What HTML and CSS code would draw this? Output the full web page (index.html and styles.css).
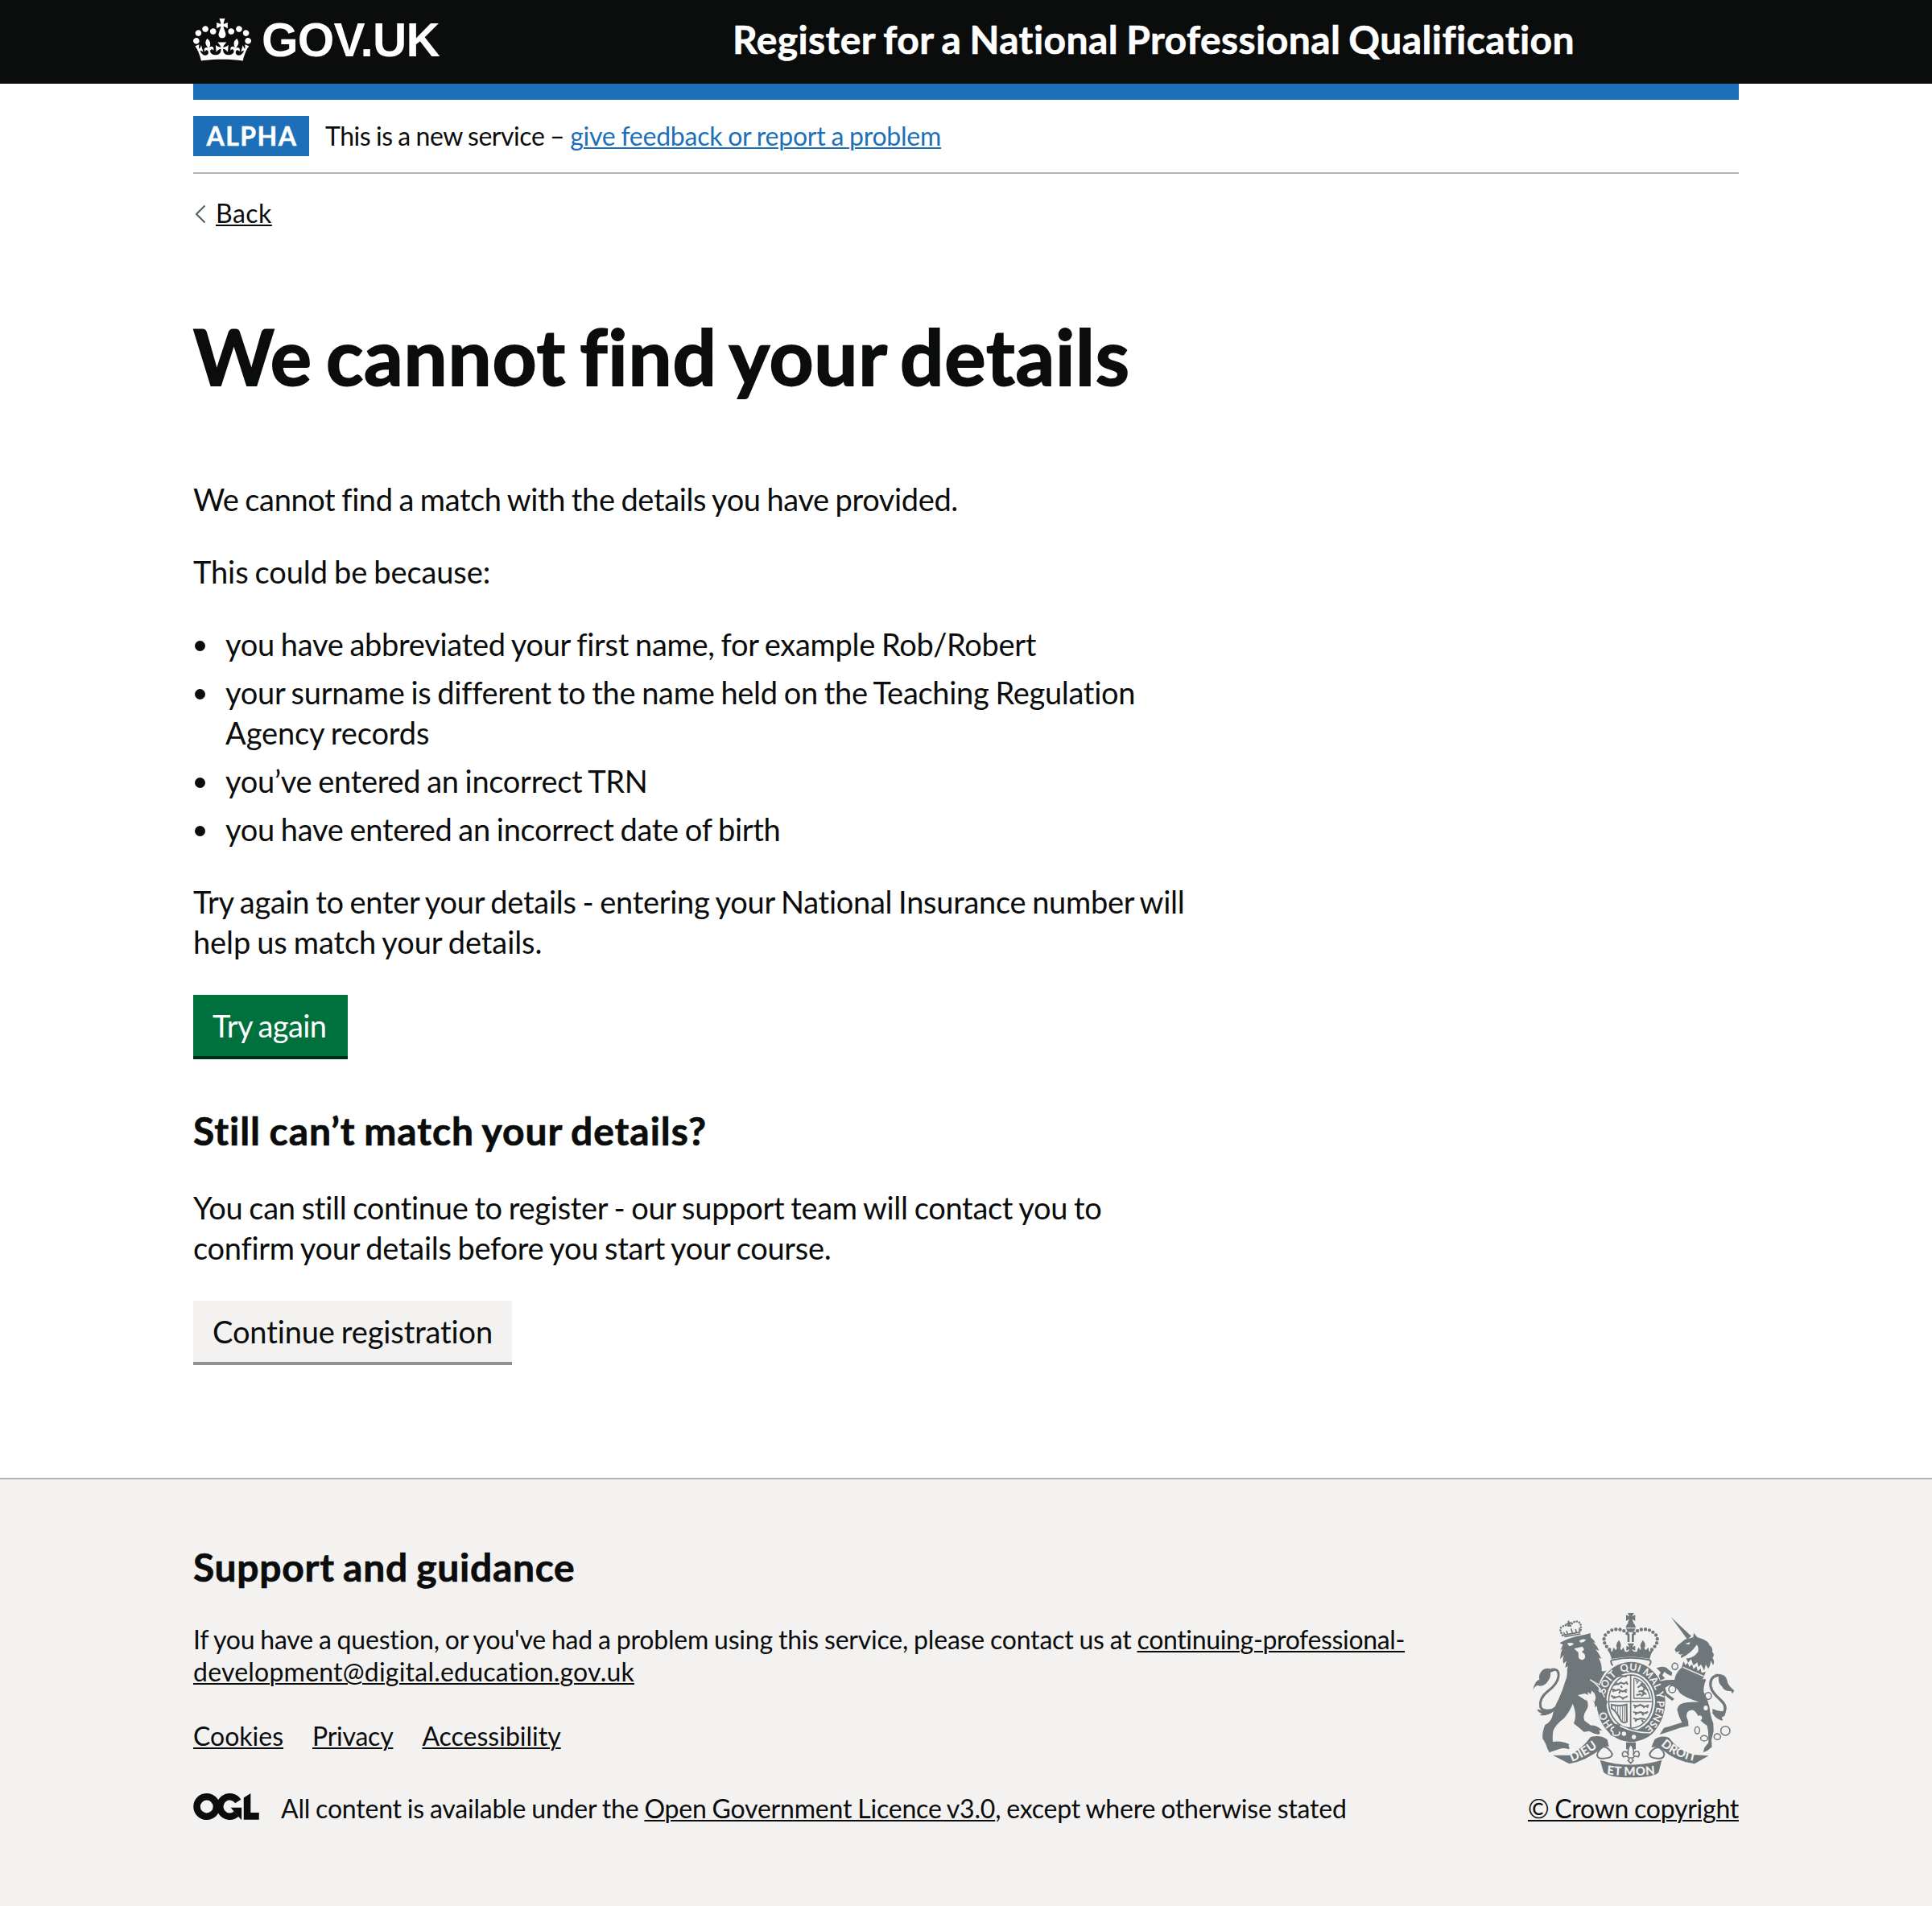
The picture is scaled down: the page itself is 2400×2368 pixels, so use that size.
FILE: index.html
```
<!DOCTYPE html>
<html lang="en">
<head>
<meta charset="utf-8">
<title>We cannot find your details - Register for a National Professional Qualification</title>
<link rel="stylesheet" href="styles.css">
</head>
<body>
<header class="header">
  <div class="container header-inner">
    <a class="logo" href="#">
      <svg class="logo-crown" viewBox="0 0 132 97" aria-hidden="true"><path fill="currentColor" fill-rule="evenodd" d="M25 30.2c3.5 1.5 7.7-.2 9.1-3.7 1.5-3.6-.2-7.8-3.9-9.2-3.6-1.4-7.6.3-9.1 3.9-1.4 3.5.3 7.5 3.9 9zM9 39.5c3.6 1.5 7.8-.2 9.2-3.7 1.5-3.6-.2-7.8-3.9-9.1-3.6-1.5-7.6.2-9.1 3.8-1.4 3.5.3 7.5 3.8 9zM4.4 57.2c3.5 1.5 7.7-.2 9.1-3.8 1.5-3.6-.2-7.7-3.9-9.1-3.5-1.5-7.6.3-9.1 3.8-1.4 3.5.3 7.6 3.9 9.1zm38.3-21.4c3.5 1.5 7.7-.2 9.1-3.8 1.5-3.6-.2-7.7-3.9-9.1-3.6-1.5-7.6.3-9.1 3.8-1.3 3.6.4 7.7 3.9 9.1zm64.4-5.6c-3.6 1.5-7.8-.2-9.1-3.7-1.5-3.6.2-7.8 3.8-9.2 3.6-1.4 7.7.3 9.2 3.9 1.3 3.5-.4 7.5-3.9 9zm15.9 9.3c-3.6 1.5-7.7-.2-9.1-3.7-1.5-3.6.2-7.8 3.7-9.1 3.6-1.5 7.7.2 9.2 3.8 1.5 3.5-.3 7.5-3.8 9zm4.7 17.7c-3.6 1.5-7.8-.2-9.2-3.8-1.5-3.6.2-7.7 3.9-9.1 3.6-1.5 7.7.3 9.2 3.8 1.3 3.5-.4 7.6-3.9 9.1zM89.3 35.8c-3.6 1.5-7.8-.2-9.2-3.8-1.4-3.6.2-7.7 3.9-9.1 3.6-1.5 7.7.3 9.2 3.8 1.4 3.6-.3 7.7-3.9 9.1zM69.7 17.7l8.9 4.7V9.3l-8.9 2.8c-.2-.3-.5-.6-.9-.9L72.4 0H59.6l3.5 11.2c-.3.3-.6.5-.9.9l-8.8-2.8v13.1l8.8-4.7c.3.3.6.7.9.9l-5 15.4v.1c-.2.8-.4 1.6-.4 2.4 0 4.1 3.1 7.5 7 8.1h.2c.3 0 .7.1 1 .1.4 0 .7 0 1-.1h.2c4-.6 7.1-4.1 7.1-8.1 0-.8-.1-1.7-.4-2.4V34l-5.1-15.4c.4-.2.7-.6 1-.9zM66 92.8c16.9 0 32.8 1.1 47.1 3.2 4-16.9 8.9-26.7 14-33.5l-9.6-3.4c1 4.9 1.1 7.2 0 10.2-1.5-1.4-3-4.3-4.2-8.7L108.6 76c2.8-2 5-3.2 7.5-3.3-4.4 9.4-10 11.9-13.6 11.2-4.3-.8-6.3-4.6-5.6-7.9 1-4.7 5.7-5.9 8-.5 4.3-8.7-3-11.4-7.6-8.8 7.1-7.2 7.9-13.5 2.1-21.1-8 6.1-8.1 12.3-4.5 20.8-4.7-5.4-12.1-2.5-9.5 6.2 3.4-5.2 7.9-2 7.2 3.1-.6 4.3-6.4 7.8-13.5 7.2-10.3-.9-10.9-8-11.2-13.8 2.5-.5 7.1 1.8 11 7.3L80.2 60c-4.1 4.4-8 5.3-12.3 5.4 1.4-4.4 8-11.6 8-11.6H55.5s6.4 7.2 7.9 11.6c-4.2-.1-8-1-12.3-5.4l1.4 16.4c3.9-5.5 8.5-7.7 10.9-7.3-.3 5.8-.9 12.8-11.1 13.8-7.2.6-12.9-2.9-13.5-7.2-.7-5 3.8-8.3 7.1-3.1 2.7-8.7-4.6-11.6-9.4-6.2 3.7-8.5 3.6-14.7-4.6-20.8-5.8 7.6-5 13.9 2.2 21.1-4.7-2.6-11.9.1-7.7 8.8 2.3-5.5 7.1-4.2 8.1.5.7 3.3-1.3 7.1-5.7 7.9-3.5.7-9-1.8-13.5-11.2 2.5.1 4.7 1.3 7.5 3.3l-4.7-15.4c-1.2 4.4-2.7 7.2-4.3 8.7-1.1-3-.9-5.3 0-10.2l-9.5 3.4c5 6.9 9.9 16.7 14 33.5 14.8-2.1 30.8-3.2 47.7-3.2z"/></svg>
      <span class="logo-text">GOV.UK</span>
    </a>
    <a class="service-name" href="#">Register for a National Professional Qualification</a>
  </div>
</header>

<div class="container">
  <div class="phase-banner">
    <strong class="tag">ALPHA</strong>
    <span><span class="phase-lead">This is a new service –</span> <a class="link" href="#">give feedback or report a problem</a></span>
  </div>

  <a class="back" href="#"><svg class="back-icon" viewBox="0 0 14 24" aria-hidden="true"><path d="M12.5 1.5 2 12l10.5 10.5" fill="none" stroke="currentColor" stroke-width="2"/></svg><span>Back</span></a>

  <main class="main">
    <h1 class="title">We cannot find your details</h1>
    <p class="tight">We cannot find a match with the details you have provided.</p>
    <p class="loose">This could be because:</p>
    <ul class="list">
      <li><span>you have abbreviated your first name, for example Rob/Robert</span></li>
      <li><span>your surname is different to the name held on the Teaching Regulation<br><span class="loose">Agency records</span></span></li>
      <li><span>you’ve entered an incorrect TRN</span></li>
      <li><span>you have entered an incorrect date of birth</span></li>
    </ul>
    <p>Try again to enter your details - entering your National Insurance number will<br><span class="loose">help us match your details.</span></p>
    <a class="button" href="#">Try again</a>
    <h2 class="heading heading-match">Still can’t match your details?</h2>
    <p>You can still continue to register - our support team will contact you to<br>confirm your details before you start your course.</p>
    <a class="button button-secondary" href="#">Continue registration</a>
  </main>
</div>

<footer class="footer">
  <div class="container footer-inner">
    <div class="footer-main">
      <h2 class="heading heading-support">Support and guidance</h2>
      <p class="contact">If you have a question, or you've had a problem using this service, please contact us at <a class="email" href="#">continuing-professional-<br><span class="domain">development@digital.education.gov.uk</span></a></p>
      <ul class="footer-links">
        <li><a href="#">Cookies</a></li>
        <li><a class="privacy" href="#">Privacy</a></li>
        <li><a href="#">Accessibility</a></li>
      </ul>
      <div class="licence">
        <svg class="ogl" viewBox="0 0 483.2 195.7" aria-hidden="true">
          <circle cx="97.8" cy="97.8" r="72.4" fill="none" stroke="currentColor" stroke-width="50.7"/>
          <path d="M329 59A72.4 72.4 0 1 0 316 152" fill="none" stroke="currentColor" stroke-width="50.7"/>
          <path d="M275 106h80v87.800h-3l-50-56z" fill="currentColor"/>
          <path d="M370.800 32.400 421.500.1v142.700h61.700v50.700H370.800z" fill="currentColor"/>
        </svg>
        <span>All content is available under the <a href="#">Open Government Licence v3.0</a>, except where otherwise stated</span>
      </div>
    </div>
    <a class="copyright" href="#">
      <svg class="crest" viewBox="54 60 786 630" aria-hidden="true">
        <defs>
          <path id="motto-ring" d="M437 519C383 519 339 467 339 403S383 287 437 287S535 339 535 403S491 519 437 519"/>
          <path id="scroll-left" d="M211 629Q265 612 327 562"/>
          <path id="scroll-mid" d="M340 672Q437 684 537 672"/>
          <path id="scroll-right" d="M545 560Q595 612 694 627"/>
        </defs>

        <!-- lion -->
        <g class="ink">
          <path d="M172 184Q205 165 246 157Q270 152 287 147L288 163Q299 170 306 184L296 181Q312 193 319 213L306 207Q319 222 328 242L318 239Q331 264 329 288Q339 291 347 286Q328 309 319 337L290 320L334 352Q344 377 348 400L336 427L329 417L322 429L315 415L305 424L302 408L295 396Q292 378 279 382L269 380L272 392Q285 419 270 437Q257 455 265 473L289 491Q309 487 331 510L318 509Q327 518 318 525L301 521L282 512L263 515L243 498L225 484Q239 452 221 410Q211 438 188 465Q157 488 148 512Q145 532 147 552Q180 547 209 562L205 567Q213 577 205 580Q188 573 171 579L144 588L134 592L126 576Q119 553 109 541Q106 519 118 489Q140 479 146 454Q151 425 168 394Q184 360 192 330Q203 308 200 284L203 269L194 276Q193 260 199 250L187 260Q182 248 188 228L175 244Q174 222 183 204L174 211Q181 199 185 190Z"/>
          <path d="M94 431Q126 445 161 416L151 437Q132 456 97 453L107 447Q94 444 88 432Z"/>
          <path d="M157 286Q126 271 108 285Q92 302 97 320Q82 321 72 359Q84 337 99 344Q119 343 128 327Q140 312 138 294Z"/>
        </g>
        <path class="line" stroke-width="9" d="M142 283Q171 277 168 309Q164 337 129 363Q95 389 101 422Q108 440 139 434"/>
        <g class="paper">
          <path d="M200 185Q216 181 225 186Q218 197 208 195ZM245 176Q256 167 270 171Q266 182 250 182ZM226 205L257 197L264 208L255 217Q272 226 266 241Q255 253 243 239L242 219Z"/>
          <path d="M240 378L266 372L279 377L276 366L288 374L292 361L303 373L307 388L302 405Q290 387 273 383L272 399Q254 388 240 378Z"/>
        </g>
        <path class="line" stroke-width="5" d="M183 155 250 143M186 144 192 150M198 138 202 150M215 130 220 146M232 132 234 144M246 127 246 141M190 160 250 150"/>
        <path class="pearls" stroke-width="8" stroke-dasharray="0 10" d="M183 155Q168 130 181 124Q194 112 211 122Q223 100 240 104Q258 112 249 144"/>
        <path class="line" stroke-width="6" d="M205 101 209 122M197 113 217 108"/>

        <!-- unicorn -->
        <g class="ink">
          <path d="M587 87 663 158 648 170Z"/>
          <path d="M601 208L612 193L640 170L670 163L672 146L686 163L705 169Q728 178 731 193Q744 200 741 217Q752 227 742 239Q752 252 744 266L736 250Q735 268 726 280L717 264L711 286L699 263L690 274L685 256L671 267L662 244L651 257L644 240Q668 244 688 217Q692 203 684 190Q660 225 625 240L624 231L632 224L622 227L613 222L622 214L606 218Z"/>
          <path d="M625 277L718 320Q708 344 709 365Q725 393 731 423Q733 452 745 484L746 512L738 546L740 571L722 586L707 591L712 574L727 555L726 516L722 492Q694 476 684 448Q670 424 651 439Q639 451 651 474L653 493L620 500L574 516L545 525L561 500L580 495L628 480Q615 457 610 432Q613 408 647 405L691 403Q641 389 620 370Q608 346 583 340L565 351L572 371L600 392L592 399L580 391L566 379L550 350L546 326L569 322L600 321Q606 294 625 277Z"/>
          <path d="M533 277Q562 265 577 282L592 294L589 307L573 299L563 291L555 304L565 316L548 323L542 305L549 293Z"/>
          <path d="M748 300Q792 295 797 324Q797 339 823 361L816 373L811 363Q785 365 777 345Q761 334 765 306Z"/>
          <path d="M742 429Q767 442 793 437L787 455L776 461L781 473Q760 472 742 446Z"/>
        </g>
        <path class="line" stroke-width="10" d="M767 304Q731 306 735 345Q740 369 771 395Q800 421 783 443Q772 453 748 437"/>
        <path class="paper" d="M629 247 720 292 711 320 622 275Z"/>
        <path class="ink" d="M634 252L641 266L650 257L655 273L666 263L671 281L682 270L687 289L698 279L701 295L717 291L706 318L626 279Z"/>
        <path class="paper-line" stroke-width="4" d="M632 274 709 308"/>
        <path class="paper" d="M640 186 659 181 655 190Z"/>
        <g class="paper"><ellipse cx="717" cy="426" rx="8" ry="9"/><ellipse cx="694" cy="463" rx="9" ry="9"/></g>
        <g class="line" stroke-width="4.500"><ellipse cx="602" cy="271" rx="11" ry="12"/><ellipse cx="592" cy="356" rx="13" ry="13"/><ellipse cx="726" cy="381" rx="12" ry="13"/><ellipse cx="685" cy="509" rx="9" ry="13"/><ellipse cx="711" cy="539" rx="13" ry="10"/><ellipse cx="760" cy="533" rx="12" ry="11"/><circle cx="790" cy="511" r="17"/></g>

        <!-- crown above the garter -->
        <path class="pearls" stroke-width="13" stroke-dasharray="0 15.300" d="M358 208Q328 181 342 155Q364 129 394 133Q414 136 426 150M516 208Q546 181 532 155Q510 129 480 133Q460 136 448 150"/>
        <g class="ink">
          <path d="M426 72H449L442 85L454 79V101L442 95L448 108H426L432 95L420 101V79L432 85ZM418 127Q424 106 437 106Q452 106 456 127ZM420 130H455Q450 145 437 143Q424 145 420 130Z"/>
          <path d="M425 150H433V180H425ZM441 150H449V180H441ZM425 185H450L443 199L454 194V213L442 207Q446 219 460 216L466 200L474 211L475 201Q469 190 483 173Q497 190 488 203L493 211L503 200L506 216L523 207Q511 224 508 243Q437 228 366 243Q362 224 350 207L369 216L373 200L382 211L386 202Q378 190 393 173Q406 190 398 203L402 211L410 200L416 216Q430 219 432 207L421 213V194L432 199Z"/>
        </g>
        <path class="paper" d="M363 249Q437 230 512 249L505 268Q437 244 371 268Z"/>
        <path class="line" stroke-width="6" d="M370 268Q356 248 372 247Q437 232 505 247Q519 251 505 268"/>

        <!-- garter and shield -->
        <ellipse class="ink" cx="438" cy="403" rx="128" ry="149"/>
        <ellipse class="paper" cx="437" cy="402" rx="91" ry="108"/>
        <ellipse class="line" stroke-width="5" cx="437" cy="402" rx="82" ry="99"/>
        <path class="line" stroke-width="5" d="M437 300V500M355 402H519"/>
        <path class="line" stroke-width="4" d="M449 315V390H512M449 315Q492 322 510 388M455 322l8 8m4-6-8 12"/>
        <g class="line" stroke-width="6" stroke-linejoin="round">
          <path d="M380 330l10 8 10-7 12 5 12-8M374 341l12-4m14 6 5 8m17-20 4 8M366 355l13 7 14-5 14 8 17-8M370 366l8-10m20 6-4 10m20-10 8 6M364 380l14 8 16-6 14 8 18-8M372 391l6-9m24 3 8 9m-38-82 28-6 22 3"/>
          <path d="M447 415l12 5 14-6 14 7 18-6M452 427l6-12m22 0 8 11m8-9 6 8M447 440l13 6 14-5 14 5 14-6M454 451l7-10m17 4 7 8m8-12 4 7M447 464l13 6 14-5 18 3M454 477l7-12m17 5 6 9"/>
          <path d="M463 350l14-10 12 12-6 12 12 12M466 365l12-3 8 12-10 8M474 335l14 4 7 15M458 378l18-4m14-26 12 14"/>
        </g>
        <path class="line" stroke-width="6" d="M366 414Q394 421 422 413L423 477Q407 488 396 465Q385 440 366 427Z"/>
        <path class="line" stroke-width="3" d="M380 418V438M389 420V454M398 420V466M407 419V473M415 418V477"/>
        <path class="ink" d="M362 500Q383 476 405 494L500 517L531 506Q503 548 438 551Q407 546 382 530Q354 533 360 513Z"/>
        <path class="paper-line" stroke-width="5" d="M397 492Q450 520 512 518M376 497Q363 499 364 511 374 513 370 522 373 530 386 528 400 526 394 514"/>
        <g class="paper"><circle cx="412" cy="522" r="8"/><circle cx="449" cy="534" r="8"/></g>
        <path class="ink" d="M283 325Q322 350 334 378Q341 390 351 403L340 430L330 420L320 428L312 412L303 410Q315 387 301 363Q303 342 283 325Z"/>
        <path class="paper-line" stroke-width="4" d="M286 320Q324 345 340 386"/>
        <g class="motto" font-size="38">
          <text><textPath href="#motto-ring" startOffset="15.500%">HO</textPath></text>
          <text><textPath href="#motto-ring" startOffset="35.500%">SOIT</textPath></text>
          <text><textPath href="#motto-ring" startOffset="49.800%">QUI</textPath></text>
          <text><textPath href="#motto-ring" startOffset="62.500%">MAL</textPath></text>
          <text><textPath href="#motto-ring" startOffset="71.500%">Y</textPath></text>
          <text><textPath href="#motto-ring" startOffset="83%">PENSE</textPath></text>
        </g>

        <!-- scrolls and fleur-de-lis -->
        <g class="ink">
          <path d="M147 602L208 602Q254 581 288 534Q326 524 350 544L356 570Q337 566 329 576Q270 624 208 634Z"/>
          <path d="M728 604L670 600Q610 580 580 537Q548 526 526 544L514 572Q540 569 552 579Q604 625 675 634Z"/>
          <path d="M323 620Q437 655 553 620L541 666Q527 684 437 685Q354 685 336 665Z"/>
          <path d="M420 554H456V580H420Z"/>
        </g>
        <g class="line" stroke-width="6">
          <path d="M348 563Q313 580 312 603Q317 617 336 614Q370 613 368 596Q350 566 330 572"/>
          <path d="M524 563Q562 580 562 601Q558 617 538 614Q506 613 508 596Q524 569 547 574"/>
          <path class="lis" stroke-width="5" d="M437 560Q423 579 429 603Q424 584 410 590Q402 598 410 608L425 605L428 612H447L450 605L465 608Q473 598 465 588Q451 584 447 603Q452 579 437 560ZM433 616 427 622 437 632 447 622 441 616"/>
        </g>
        <g class="motto scroll-text" font-size="45">
          <text><textPath href="#scroll-left" startOffset="47%">DIEU</textPath></text>
          <text><textPath href="#scroll-mid" startOffset="50%">ET MON</textPath></text>
          <text><textPath href="#scroll-right" startOffset="47%">DROIT</textPath></text>
        </g>
      </svg>
      <span>© Crown copyright</span>
    </a>
  </div>
</footer>
</body>
</html>
```
FILE: styles.css
```
* { box-sizing: border-box; }

body {
  margin: 0;
  background: #fff;
  color: #0b0c0c;
  font-family: Lato, "Liberation Sans", sans-serif;
  font-size: 38px;
  line-height: 50px;
  letter-spacing: -0.29px;
  word-spacing: -1.5px;
}

h1, h2, p, ul { margin: 0; padding: 0; }
ul { list-style: none; }

a {
  color: inherit;
  text-decoration-thickness: 2px;
  text-underline-offset: 2px;
}

.container { width: 1920px; margin: 0 auto; }
.tight { letter-spacing: -0.38px; }
.loose { letter-spacing: -0.1px; }

/* Header */
.header { height: 104px; background: #0b0c0c; color: #fff; }
.header-inner {
  display: flex;
  height: 124px;
  border-bottom: 20px solid #1d70b8;
}
.logo {
  display: flex;
  width: 670px;
  padding-top: 18px;
  text-decoration: none;
}
.logo-crown { width: 72px; height: 53px; margin-top: 5px; }
.logo-text {
  margin: -1px 0 0 13px;
  font: bold 58.600px/66px "Liberation Sans", sans-serif;
  letter-spacing: -0.8px;
}
.service-name {
  padding-top: 19px;
  font-size: 48px;
  font-weight: 700;
  line-height: 60px;
  letter-spacing: 0.42px;
  word-spacing: -2px;
  text-decoration: none;
  white-space: nowrap;
  -webkit-text-stroke: 0.6px currentColor;
}

/* Phase banner and back link */
.phase-banner {
  display: flex;
  gap: 20px;
  margin-top: 20px;
  padding: 20px 0;
  border-bottom: 2px solid #b1b4b6;
  font-size: 32px;
  letter-spacing: -0.24px;
  word-spacing: -1px;
  line-height: 50px;
  height: 92px;
}
.phase-lead { letter-spacing: -0.45px; }
.tag {
  width: 144px;
  height: 50px;
  background: #1d70b8;
  color: #fff;
  text-align: center;
  letter-spacing: 1.5px;
  text-indent: 2px;
  -webkit-text-stroke: 0.5px currentColor;
}
.link { color: #1d70b8; }
.back {
  display: flex;
  width: max-content;
  height: 39px;
  margin-top: 29px;
  font-size: 32px;
  line-height: 40px;
  letter-spacing: 0.5px;
  text-decoration: none;
}
.back span { text-decoration: underline 2px; text-underline-offset: 2px; }
.back-icon { width: 14px; height: 24px; margin: 9px 12px 0 2px; color: #505a5f; }

/* Main content */
.main { display: flex; flex-direction: column; align-items: flex-start; padding-top: 108px; }
.main p { margin-bottom: 40px; white-space: nowrap; }
.title {
  margin: 0 0 103px;
  font-size: 96px;
  line-height: 100px;
  letter-spacing: 0.8px;
  word-spacing: -7px;
  -webkit-text-stroke: 1.800px currentColor;
}
.list { display: grid; gap: 10px; margin-bottom: 40px; white-space: nowrap; }
.list li { display: flex; }
.list li::before {
  content: "";
  width: 13px;
  height: 13px;
  margin: 21px 25px 0 2px;
  border-radius: 50%;
  background: #0b0c0c;
}
.button {
  width: 192px;
  height: 80px;
  margin-top: 1px;
  padding: 13px 24px;
  border-bottom: 4px solid #002d18;
  background: #00703c;
  color: #fff;
  letter-spacing: -0.6px;
  text-decoration: none;
  white-space: nowrap;
}
.button-secondary {
  width: 396px;
  border-color: #929191;
  background: #f3f2f1;
  color: #0b0c0c;
  letter-spacing: -0.12px;
}
.heading {
  font-size: 48px;
  line-height: 60px;
  word-spacing: -2px;
  -webkit-text-stroke: 0.7px currentColor;
}
.heading-match { margin: 59px 0 40px; letter-spacing: 0.95px; }

/* Footer */
.footer {
  height: 532px;
  margin-top: 140px;
  border-top: 2px solid #b1b4b6;
  background: #f3f2f1;
  font-size: 32px;
  line-height: 40px;
  letter-spacing: -0.2px;
  word-spacing: -1px;
}
.footer-inner { display: flex; justify-content: space-between; padding-top: 79px; }
.heading-support { margin-bottom: 40px; letter-spacing: 0.7px; }
.footer-main { white-space: nowrap; }
.email { letter-spacing: -0.34px; }
.domain { letter-spacing: 0.22px; }
.footer-links { display: flex; gap: 36px; margin: 40px 0 50px; letter-spacing: 0; }
.privacy { letter-spacing: -0.25px; }
.licence { display: flex; gap: 27px; }
.ogl { width: 82px; height: 33px; margin-top: 1px; }
.copyright {
  display: flex;
  flex-direction: column;
  gap: 17px;
  width: 262px;
  padding-top: 83px;
  letter-spacing: -0.26px;
  white-space: nowrap;
}

/* Coat of arms */
.crest { width: 262px; height: 210px; color: #6f777b; }
.ink { fill: currentColor; }
.paper { fill: #f3f2f1; }
.line { fill: none; stroke: currentColor; }
.paper-line { fill: none; stroke: #f3f2f1; }
.pearls { fill: none; stroke: currentColor; stroke-linecap: round; }
.lis { fill: #f3f2f1; }
.motto { fill: #f3f2f1; font-weight: 700; letter-spacing: 0; text-anchor: middle; }
.scroll-text { font-weight: 900; letter-spacing: 1px; }
```
